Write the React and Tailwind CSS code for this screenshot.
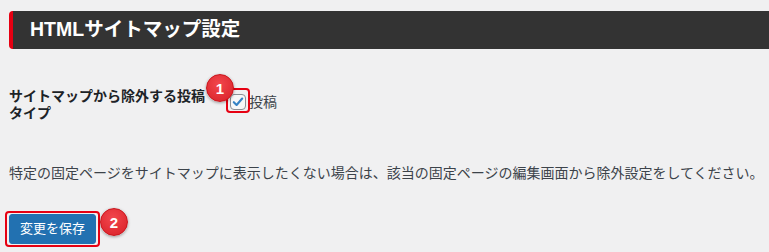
import React from "react";

function Badge({ n, className }) {
  return (
    <div
      className={
        "absolute w-[28px] h-[28px] rounded-full flex items-center justify-center text-white font-bold text-[15px] leading-none border border-[#c8141b] shadow-[0_1px_3px_rgba(0,0,0,0.35)] bg-[radial-gradient(circle_at_45%_35%,#f2474d,#d81f27)] z-10 " +
        className
      }
      style={{ fontFamily: '"Liberation Sans", Arial, sans-serif' }}
    >
      {n}
    </div>
  );
}

export default function App() {
  return (
    <div
      className="w-[769px] h-[252px] overflow-hidden bg-[#f0f0f1] pl-[9px] text-[#1d2327]"
      style={{ fontFamily: '"Liberation Sans", "Noto Sans CJK JP", sans-serif' }}
    >
      <div className="mt-[11px] h-[38px] bg-[#333333] border-l-4 border-[#e60012] rounded-l-[4px] pl-[17px] flex items-center text-white font-bold text-[19.5px] leading-none">
        HTMLサイトマップ設定
      </div>

      <div className="mt-[39px] flex items-start">
        <div className="w-[200px] font-bold text-[14px] leading-[17px]">
          サイトマップから除外する投稿タイプ
        </div>
        <div className="ml-[21px] mt-[5px] flex items-center">
          <div className="relative">
            <Badge n="1" className="left-[-24px] top-[-20px]" />
            <div className="absolute left-[-4px] right-[-4px] top-[-6px] bottom-[-3px] border-2 border-[#e60012] rounded-[4px]" />
            <div className="w-[16px] h-[16px] bg-[#f6f7f7] border border-[#8c8f94] rounded-[4px] flex items-center justify-center">
              <svg width="16" height="16" viewBox="0 0 20 20">
                <path
                  d="M4 10.2 L8 14.2 L16 5"
                  fill="none"
                  stroke="#3582c4"
                  strokeWidth="3"
                  strokeLinecap="round"
                  strokeLinejoin="round"
                />
              </svg>
            </div>
          </div>
          <span className="ml-[3px] text-[14px] leading-[18px] text-[#3c434a]">投稿</span>
        </div>
      </div>

      <p className="mt-[41px] text-[14px] leading-[20px] text-[#3c434a] whitespace-nowrap">
        特定の固定ページをサイトマップに表示したくない場合は、該当の固定ページの編集画面から除外設定をしてください。
      </p>

      <div className="mt-[31px] relative inline-block">
        <div className="absolute left-[-4px] right-[-4px] top-[-3px] bottom-[-3px] border-2 border-[#e60012] rounded-[4px]" />
        <button className="relative h-[30px] px-[10px] bg-[#2271b1] border border-[#2271b1] rounded-[3px] text-white text-[13px] leading-[28px]">
          変更を保存
        </button>
        <Badge n="2" className="left-[91px] top-[-6px]" />
      </div>
    </div>
  );
}
